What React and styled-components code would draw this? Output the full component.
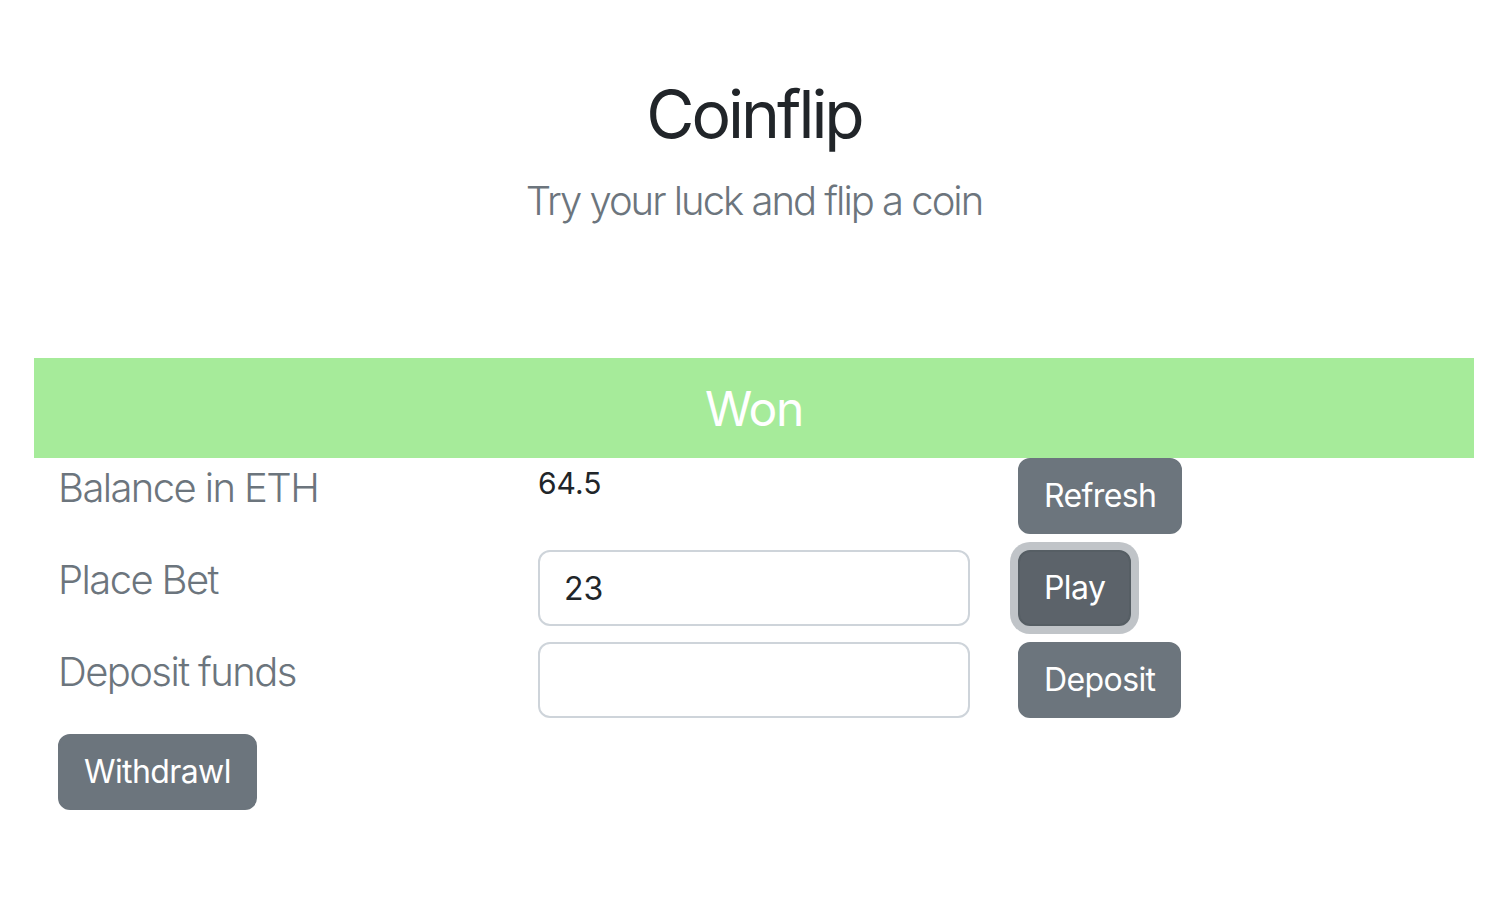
import React, { useState } from "react";
import styled, { createGlobalStyle } from "styled-components";

const GlobalStyle = createGlobalStyle`
  body {
    margin: 0;
    background: #fff;
    font-family: Inter, "Liberation Sans", sans-serif;
    color: #212529;
  }
`;

const Page = styled.div`
  width: 1440px;
  padding: 75px 0 0 34px;
`;

const Header = styled.header`
  text-align: center;
  margin-bottom: 127px;
`;

const Title = styled.h1`
  margin: 0 0 17px;
  font-size: 66px;
  font-weight: 400;
  line-height: 1.2;
  letter-spacing: -3px;
  color: #212529;
`;

const Subtitle = styled.p`
  margin: 0;
  font-size: 40px;
  font-weight: 300;
  line-height: 1.5;
  letter-spacing: -2px;
  color: #6c757d;
`;

const Banner = styled.div`
  height: 100px;
  background: #a6eb9a;
  color: #fff;
  font-size: 48px;
  letter-spacing: -1.3px;
  display: flex;
  align-items: center;
  justify-content: center;
`;

const Row = styled.div`
  display: grid;
  grid-template-columns: repeat(3, 480px);
  margin-bottom: 16px;
`;

const Col = styled.div`
  padding: 0 24px;
`;

const Label = styled.div`
  font-size: 40px;
  font-weight: 300;
  line-height: 1.5;
  letter-spacing: -1.6px;
  color: #6c757d;
`;

const Value = styled.div`
  padding-top: 3px;
  font-size: 30px;
  line-height: 1.5;
  color: #212529;
`;

const Input = styled.input`
  box-sizing: border-box;
  width: 100%;
  height: 76px;
  padding: 12px 24px;
  font-family: inherit;
  font-size: 32px;
  color: #212529;
  border: 2px solid #ced4da;
  border-radius: 12px;
  outline: none;
`;

const Button = styled.button`
  padding: 12px 24px;
  font-family: inherit;
  font-size: 32px;
  line-height: 48px;
  letter-spacing: -0.6px;
  color: #fff;
  background: ${(p) => (p.$active ? "#5c636a" : "#6c757d")};
  border: 2px solid ${(p) => (p.$active ? "#565e64" : "#6c757d")};
  border-radius: 12px;
  box-shadow: ${(p) => (p.$active ? "0 0 0 8px rgba(130, 138, 145, 0.5)" : "none")};
  cursor: pointer;
`;

export default function App() {
  const [bet, setBet] = useState("23");
  const [deposit, setDeposit] = useState("");

  return (
    <>
      <GlobalStyle />
      <Page>
        <Header>
          <Title>Coinflip</Title>
          <Subtitle>Try your luck and flip a coin</Subtitle>
        </Header>
        <Banner>Won</Banner>
        <Row>
          <Col>
            <Label>Balance in ETH</Label>
          </Col>
          <Col>
            <Value>64.5</Value>
          </Col>
          <Col>
            <Button>Refresh</Button>
          </Col>
        </Row>
        <Row>
          <Col>
            <Label>Place Bet</Label>
          </Col>
          <Col>
            <Input value={bet} onChange={(e) => setBet(e.target.value)} />
          </Col>
          <Col>
            <Button $active>Play</Button>
          </Col>
        </Row>
        <Row>
          <Col>
            <Label>Deposit funds</Label>
          </Col>
          <Col>
            <Input value={deposit} onChange={(e) => setDeposit(e.target.value)} />
          </Col>
          <Col>
            <Button>Deposit</Button>
          </Col>
        </Row>
        <Row>
          <Col>
            <Button>Withdrawl</Button>
          </Col>
        </Row>
      </Page>
    </>
  );
}
